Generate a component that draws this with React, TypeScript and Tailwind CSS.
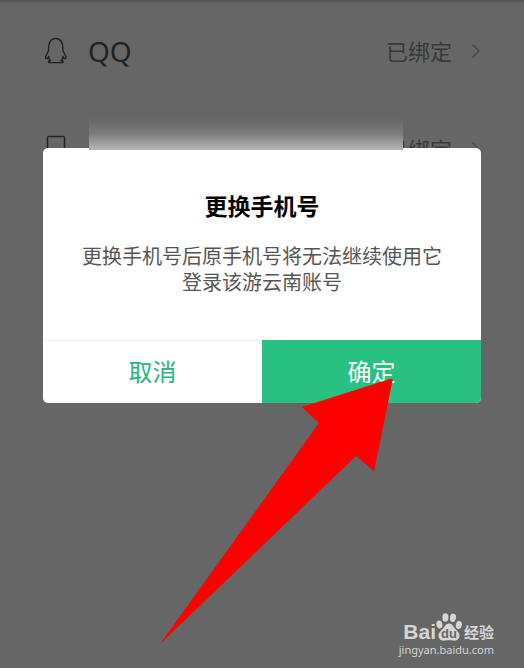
import { ChevronRight } from 'lucide-react';
import type { ReactNode } from 'react';

type Account = {
  name: string;
  status: string;
  icon: ReactNode;
};

const ACCOUNTS: Account[] = [
  { name: 'QQ', status: '已绑定', icon: <PenguinIcon /> },
  { name: '', status: '已绑定', icon: <PhoneIcon /> },
];

export default function App() {
  return (
    <div className="relative min-h-screen overflow-hidden bg-white font-['Noto_Sans','Noto_Sans_CJK_SC',sans-serif]">
      <main className="pl-8 pr-9 pt-0.5">
        <ul className="divide-y divide-[#fafafa]">
          {ACCOUNTS.map((account, i) => (
            <li key={i} className="flex h-[98px] items-center pl-3">
              <span className="flex w-11 shrink-0">{account.icon}</span>
              <span className="text-[28px] leading-8 text-[#555]">{account.name}</span>
              <span className="ml-auto text-[22px] leading-8 text-[#909090]">{account.status}</span>
              <ChevronRight className="ml-3 h-6 w-6 text-[#b0b0b0]" strokeWidth={1.5} />
            </li>
          ))}
        </ul>
      </main>

      <div className="absolute inset-0 bg-black/60 px-[43px] pt-[148px]">
        <ConfirmDialog />
      </div>

      <div className="absolute inset-x-0 top-0 h-1 bg-gradient-to-b from-black/20 to-transparent" />
      {/* privacy fade over the bound phone number */}
      <div className="absolute left-[89px] right-[121px] top-[118px] h-8 bg-gradient-to-b from-[#666] via-[#7c7c7c] to-[#b8b8b8]" />

      <svg
        className="pointer-events-none absolute left-[160px] top-[379px] h-[266px] w-[234px]"
        viewBox="160 379 234 266"
        aria-hidden="true">
        <path d="M160 644 L319 423 L302 407 L393 378 L374 471 L356 456 Z" fill="#f00" />
      </svg>

      <Watermark />
    </div>
  );
}

function ConfirmDialog() {
  return (
    <section
      role="dialog"
      aria-labelledby="dialog-title"
      className="overflow-hidden rounded-[5px] bg-white text-center">
      <div className="px-6 pb-11 pt-[42px]">
        <h1 id="dialog-title" className="text-[23px] font-bold leading-8 text-black">
          更换手机号
        </h1>
        <p className="mt-[22px] text-[20px] leading-[26px] text-[#555]">
          更换手机号后原手机号将无法继续使用它
          <br />
          登录该游云南账号
        </p>
      </div>
      <div className="grid grid-cols-2 text-[24px] leading-8">
        <button type="button" className="h-[63px] border-t border-[#eee] text-[#28b57b]">
          取消
        </button>
        <button type="button" className="h-[63px] bg-[#28c182] text-white">
          确定
        </button>
      </div>
    </section>
  );
}

function PenguinIcon() {
  return (
    <svg
      className="h-7 w-6"
      viewBox="0 0 24 28"
      fill="none"
      stroke="#555"
      strokeWidth="1.4"
      strokeLinejoin="round"
      aria-hidden="true">
      <path d="M4.6 13.5 C4.2 6 6.5 1.5 11.7 1.5 S19.2 6 18.9 13.5 L21.8 19.5 V21.5 H19.6 L18.9 19.5 C18.7 21.5 18 22.7 17 23.7 H19 V25.6 H4.8 V23.7 H6.5 C5.5 22.7 4.9 21.5 4.6 19.5 L3.9 21.5 H1.7 V19.5 Z" />
    </svg>
  );
}

function PhoneIcon() {
  return (
    <svg
      className="h-7 w-6"
      viewBox="0 0 24 28"
      fill="none"
      stroke="#555"
      strokeWidth="1.5"
      aria-hidden="true">
      <rect x="3.5" y="1.5" width="17" height="25.5" rx="1" />
      <path d="M10 23 H14" />
    </svg>
  );
}

function Watermark() {
  return (
    <footer className="absolute bottom-2.5 right-[30px] text-[#d6d6d6]">
      <div className="flex items-end justify-end">
        <span className="font-['Liberation_Sans',sans-serif] text-[21px] font-bold leading-5">Bai</span>
        <svg className="h-[30px] w-[26px]" viewBox="0 0 26 30" fill="currentColor" aria-hidden="true">
          <ellipse cx="3.4" cy="12.5" rx="3" ry="4" transform="rotate(-12 3.4 12.5)" />
          <ellipse cx="9.4" cy="5.5" rx="3" ry="4.2" />
          <ellipse cx="17" cy="5.8" rx="3" ry="4.2" transform="rotate(10 17 5.8)" />
          <ellipse cx="22.8" cy="13" rx="3" ry="4" transform="rotate(12 22.8 13)" />
          <path d="M13 11.5 C16.5 11.5 17.3 15 19.5 17.2 C22 19.5 24 21.5 23.4 24.8 C22.7 28.5 19.3 29 16.8 28.5 C14.3 28 11.7 28 9.2 28.5 C6.7 29 3.3 28.5 2.6 24.8 C2 21.5 4 19.5 6.5 17.2 C8.7 15 9.5 11.5 13 11.5 Z" />
          <text
            x="13"
            y="26"
            textAnchor="middle"
            fill="#666"
            fontFamily="Liberation Sans, sans-serif"
            fontSize="13"
            fontWeight="bold">
            du
          </text>
        </svg>
        <span className="ml-0.5 font-['Noto_Sans_CJK_SC',sans-serif] text-[15px] font-bold leading-5">经验</span>
      </div>
      <a href="#" className="block text-[11px] leading-4">
        jingyan.baidu.com
      </a>
    </footer>
  );
}
